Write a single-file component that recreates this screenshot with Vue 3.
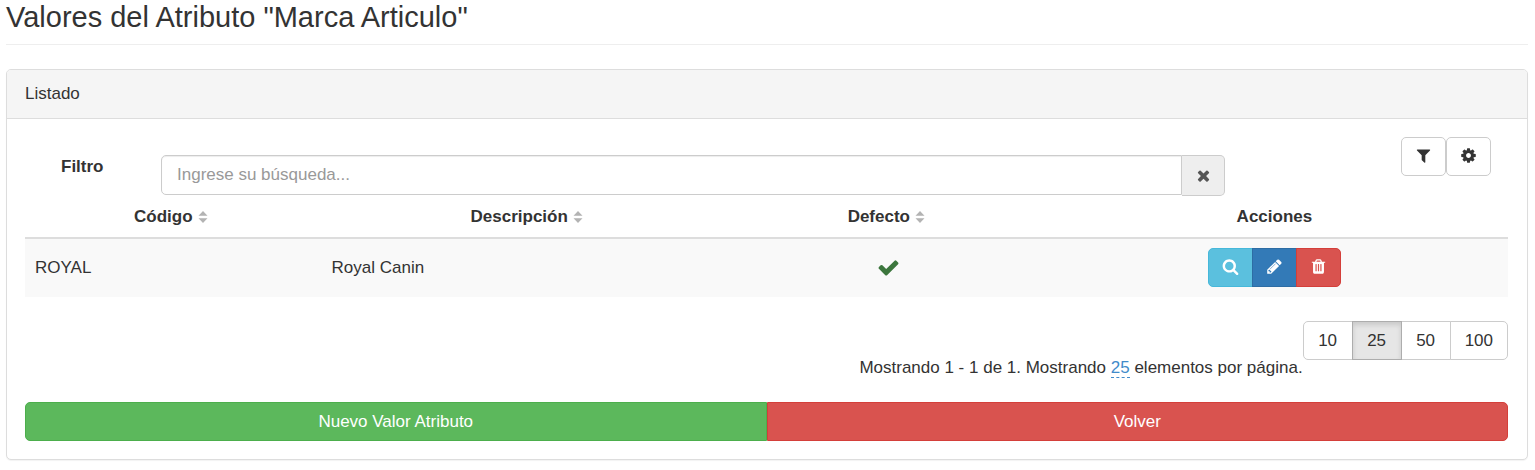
<script setup>
import { ref } from 'vue'

const icons = {
  times: 'M1490 1322q0 40-28 68l-136 136q-28 28-68 28t-68-28l-294-294-294 294q-28 28-68 28t-68-28l-136-136q-28-28-28-68t28-68l294-294-294-294q-28-28-28-68t28-68l136-136q28-28 68-28t68 28l294 294 294-294q28-28 68-28t68 28l136 136q28 28 28 68t-28 68l-294 294 294 294q28 28 28 68z',
  filter: 'M1595 295q17 41-14 70l-493 493v742q0 42-39 59-13 5-25 5-27 0-45-19l-256-256q-19-19-19-45v-486l-493-493q-31-29-14-70 17-39 59-39h1280q42 0 59 39z',
  cog: 'M1152 896q0-106-75-181t-181-75-181 75-75 181 75 181 181 75 181-75 75-181zm512-109v222q0 12-8 23t-20 13l-185 28q-19 54-39 91 35 50 107 138 10 12 10 25t-9 23q-27 37-99 108t-94 71q-12 0-26-9l-138-108q-44 23-91 38-16 136-29 186-7 28-36 28h-222q-14 0-24.5-8.5t-11.5-21.5l-28-184q-49-16-90-37l-141 107q-10 9-25 9-14 0-25-11-126-114-165-168-7-10-7-23 0-12 8-23 15-21 51-66.5t54-70.5q-27-50-41-99l-183-27q-13-2-21-12.5t-8-23.5v-222q0-12 8-23t19-13l186-28q14-46 39-92-40-57-107-138-10-12-10-24 0-10 9-23 26-36 98.5-107.5t94.5-71.5q13 0 26 10l138 107q44-23 91-38 16-136 29-186 7-28 36-28h222q14 0 24.5 8.5t11.5 21.5l28 184q49 16 90 37l142-107q9-9 24-9 13 0 25 10 129 119 165 170 7 8 7 22 0 12-8 23-15 21-51 66.5t-54 70.5q26 50 41 98l183 28q13 2 21 12.5t8 23.5z',
  search: 'M1216 832q0-185-131.5-316.5t-316.5-131.5-316.5 131.5-131.5 316.5 131.5 316.5 316.5 131.5 316.5-131.5 131.5-316.5zm512 832q0 52-38 90t-90 38q-54 0-90-38l-343-342q-179 124-399 124-143 0-273.5-55.5t-225-150-150-225-55.5-273.5 55.5-273.5 150-225 225-150 273.5-55.5 273.5 55.5 225 150 150 225 55.5 273.5q0 220-124 399l343 343q37 37 37 90z',
  pencil: 'M491 1536l91-91-235-235-91 91v107h128v128h107zm523-928q0-22-22-22-10 0-17 7l-542 542q-7 7-7 17 0 22 22 22 10 0 17-7l542-542q7-7 7-17zm-54-192l416 416-832 832h-416v-416zm683 96q0 53-37 90l-166 166-416-416 166-165q36-38 90-38 53 0 91 38l235 234q37 39 37 91z',
  trash: 'M704 1376v-704q0-14-9-23t-23-9h-64q-14 0-23 9t-9 23v704q0 14 9 23t23 9h64q14 0 23-9t9-23zm256 0v-704q0-14-9-23t-23-9h-64q-14 0-23 9t-9 23v704q0 14 9 23t23 9h64q14 0 23-9t9-23zm256 0v-704q0-14-9-23t-23-9h-64q-14 0-23 9t-9 23v704q0 14 9 23t23 9h64q14 0 23-9t9-23zm-544-992h448l-48-117q-7-9-17-11h-317q-10 2-17 11zm928 32v64q0 14-9 23t-23 9h-96v948q0 83-47 143.5t-113 60.5h-832q-66 0-113-58.5t-47-141.5v-952h-96q-14 0-23-9t-9-23v-64q0-14 9-23t23-9h309l70-167q15-37 54-63t79-26h320q40 0 79 26t54 63l70 167h309q14 0 23 9t9 23z',
  check: 'M1671 566q0 40-28 68l-724 724-136 136q-28 28-68 28t-68-28l-136-136-362-362q-28-28-28-68t28-68l136-136q28-28 68-28t68 28l294 295 656-657q28-28 68-28t68 28l136 136q28 28 28 68z'
}

const query = ref('')
const pageSize = ref(25)
const pageSizes = [10, 25, 50, 100]
const columns = [
  { name: 'Código', cls: 'col-code' },
  { name: 'Descripción', cls: 'col-desc' },
  { name: 'Defecto', cls: 'col-default' }
]
const rows = [{ code: 'ROYAL', description: 'Royal Canin', isDefault: true }]
const actions = [
  { icon: 'search', cls: 'info', label: 'Ver' },
  { icon: 'pencil', cls: 'primary', label: 'Editar' },
  { icon: 'trash', cls: 'danger', label: 'Eliminar' }
]
</script>

<template>
  <main class="page">
    <h1 class="title">Valores del Atributo "Marca Articulo"</h1>

    <section class="panel">
      <header class="panel-heading">Listado</header>
      <div class="panel-body">
        <div class="toolbar">
          <label class="filter-label" for="filtro">Filtro</label>
          <div class="input-group">
            <input id="filtro" v-model="query" class="field" type="text" placeholder="Ingrese su búsqueda...">
            <button class="addon" type="button" aria-label="Limpiar" @click="query = ''">
              <svg class="icon" viewBox="0 0 1792 1792"><path :d="icons.times" /></svg>
            </button>
          </div>
          <div class="tools">
            <button class="btn tool" type="button" aria-label="Filtros">
              <svg class="icon" viewBox="0 0 1792 1792"><path :d="icons.filter" /></svg>
            </button>
            <button class="btn tool" type="button" aria-label="Configuración">
              <svg class="icon" viewBox="0 0 1792 1792"><path :d="icons.cog" /></svg>
            </button>
          </div>
        </div>

        <table class="grid">
          <thead>
            <tr>
              <th v-for="c in columns" :key="c.name" :class="c.cls" scope="col">
                <button class="sort" type="button">
                  {{ c.name }}
                  <svg class="sort-icon" viewBox="0 0 10 12"><path d="M5 0L9.5 4.8H.5zM5 12L.5 7.2h9z" /></svg>
                </button>
              </th>
              <th class="col-actions" scope="col">Acciones</th>
            </tr>
          </thead>
          <tbody>
            <tr v-for="r in rows" :key="r.code">
              <td>{{ r.code }}</td>
              <td>{{ r.description }}</td>
              <td>
                <svg v-if="r.isDefault" class="icon check" viewBox="0 0 1792 1792" role="img" aria-label="Sí"><path :d="icons.check" /></svg>
              </td>
              <td>
                <div class="actions">
                  <button v-for="a in actions" :key="a.icon" type="button" class="btn action" :class="a.cls" :aria-label="a.label">
                    <svg class="icon" viewBox="0 0 1792 1792"><path :d="icons[a.icon]" /></svg>
                  </button>
                </div>
              </td>
            </tr>
          </tbody>
        </table>

        <div class="footer">
          <p class="summary">Mostrando 1 - 1 de 1. Mostrando <a class="count" href="#">{{ pageSize }}</a> elementos por página.</p>
          <div class="sizes">
            <button v-for="s in pageSizes" :key="s" type="button" class="btn size" :class="{ active: s === pageSize }" @click="pageSize = s">{{ s }}</button>
          </div>
        </div>

        <div class="bottom">
          <button class="btn wide success" type="button">Nuevo Valor Atributo</button>
          <button class="btn wide danger" type="button">Volver</button>
        </div>
      </div>
    </section>
  </main>
</template>

<style>
body {
  margin: 0;
  background: #fff;
}
</style>

<style scoped>
.page,
.page * {
  box-sizing: border-box;
}
.page {
  padding: 0 7px 8px 6px;
  font-family: "Liberation Sans", Arial, sans-serif;
  font-size: 17px;
  line-height: 24px;
  color: #333;
}
.title {
  margin: 0 0 24px;
  padding-bottom: 9px;
  border-bottom: 1px solid #eee;
  font-size: 29px;
  font-weight: 400;
  line-height: 35px;
}
.panel {
  border: 1px solid #ddd;
  border-radius: 5px;
  background: #fff;
  box-shadow: 0 1px 1px rgba(0, 0, 0, 0.05);
}
.panel-heading {
  padding: 12px 18px;
  border-bottom: 1px solid #ddd;
  border-radius: 4px 4px 0 0;
  background: #f5f5f5;
}
.panel-body {
  padding: 18px 19px 18px 18px;
}
button,
input {
  margin: 0;
  font: inherit;
  color: inherit;
}
button {
  cursor: pointer;
}
.icon {
  display: block;
  flex: none;
  width: 17px;
  height: 17px;
  fill: currentColor;
}
.toolbar {
  display: grid;
  grid-template-columns: 136px minmax(0, 1064fr) minmax(120px, 283fr);
  align-items: start;
}
.filter-label {
  padding: 18px 0 0 36px;
  font-weight: 700;
}
.input-group {
  display: flex;
  padding-top: 18px;
}
.field {
  flex: 1;
  min-width: 0;
  height: 40px;
  padding: 0 15px;
  border: 1px solid #ccc;
  border-radius: 5px 0 0 5px;
  background: #fff;
  box-shadow: inset 0 1px 1px rgba(0, 0, 0, 0.075);
  color: #555;
}
.field::placeholder {
  color: #999;
  opacity: 1;
}
.addon {
  display: flex;
  align-items: center;
  justify-content: center;
  width: 43px;
  height: 41px;
  padding: 0;
  border: 1px solid #ccc;
  border-left: 0;
  border-radius: 0 5px 5px 0;
  background: #eee;
  color: #555;
}
.tools {
  display: flex;
  justify-content: flex-end;
  padding-right: 17px;
}
.btn {
  display: flex;
  align-items: center;
  justify-content: center;
  height: 39px;
  padding: 0 14px;
  border: 1px solid #ccc;
  border-radius: 5px;
  background: #fff;
}
.tool,
.action {
  width: 45px;
  padding: 0 0 2px;
}
.grid {
  width: 100%;
  border-collapse: collapse;
  table-layout: fixed;
}
.grid th {
  padding: 9px 10px 8px;
  border-bottom: 2px solid #ddd;
  font-weight: 700;
  text-align: center;
}
.grid td {
  padding: 9px 10px 10px;
  background: #f9f9f9;
}
.col-code {
  width: 20%;
}
.col-desc {
  width: 28%;
}
.col-default {
  width: 20.5%;
}
.col-actions {
  width: 31.5%;
}
.sort {
  display: inline-flex;
  align-items: center;
  gap: 5px;
  padding: 0 5px 0 0;
  border: 0;
  background: none;
}
.sort-icon {
  width: 10px;
  height: 12px;
  fill: #b3b3b3;
}
.check {
  width: 23px;
  height: 23px;
  margin: 0 auto;
  color: #3c763d;
}
.actions {
  display: flex;
  justify-content: center;
}
.action {
  border-radius: 0;
}
.action:first-child,
.size:first-child,
.wide:first-child {
  border-radius: 5px 0 0 5px;
}
.action:last-child,
.size:last-child,
.wide:last-child {
  border-radius: 0 5px 5px 0;
}
.info {
  border-color: #46b8da;
  background: #5bc0de;
  color: #fff;
}
.primary {
  border-color: #2e6da4;
  background: #337ab7;
  color: #fff;
}
.danger {
  border-color: #d43f3a;
  background: #d9534f;
  color: #fff;
}
.success {
  border-color: #4cae4c;
  background: #5cb85c;
  color: #fff;
}
.action + .action,
.size + .size {
  margin-left: -1px;
}
.footer {
  display: flex;
  justify-content: flex-end;
  margin: 24px 0 22px;
}
.summary {
  margin: 35px 0 0;
}
.count {
  border-bottom: 1px dashed #428bca;
  color: #428bca;
  text-decoration: none;
}
.sizes {
  display: flex;
  align-items: flex-start;
}
.size {
  min-width: 50px;
  border-radius: 0;
}
.size.active {
  z-index: 1;
  border-color: #adadad;
  background: #e6e6e6;
  box-shadow: inset 0 3px 5px rgba(0, 0, 0, 0.125);
}
.bottom {
  display: flex;
}
.wide {
  flex: 1;
}
</style>
